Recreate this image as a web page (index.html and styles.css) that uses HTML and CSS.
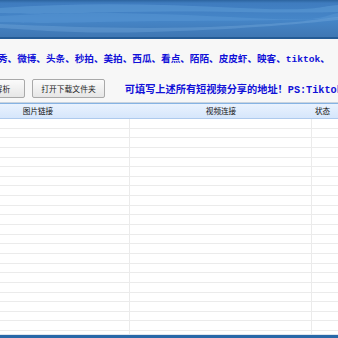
FILE: index.html
```html
<!DOCTYPE html>
<html lang="zh-CN">
<head>
    <meta charset="UTF-8">
    <meta name="viewport" content="width=device-width, initial-scale=1.0">
    <title>短视频解析</title>
    <link rel="stylesheet" href="styles.css">
</head>
<body>
    <div class="window">
        <header class="banner">
            <svg class="banner-art" width="338" height="39" viewBox="0 0 338 39" preserveAspectRatio="none">
                <defs>
                    <linearGradient id="sky" x1="0" y1="0" x2="0" y2="1">
                        <stop offset="0" stop-color="#2c649f"/>
                        <stop offset="0.08" stop-color="#3f7cbf"/>
                        <stop offset="0.5" stop-color="#4686c8"/>
                        <stop offset="1" stop-color="#3e75b1"/>
                    </linearGradient>
                </defs>
                <rect width="338" height="39" fill="url(#sky)"/>
                <path d="M0 8 C80 2 160 4 240 8 S320 6 338 5 L338 12 C280 14 200 10 120 12 S30 14 0 13 Z" fill="#5d9ad6" opacity="0.55"/>
                <path d="M0 16 C90 10 170 14 250 18 S320 16 338 13 L338 18 C270 22 180 20 100 22 S20 22 0 22 Z" fill="#5b98d4" opacity="0.45"/>
                <path d="M0 24 C70 27 150 30 230 26 S310 20 338 17 L338 20 C300 24 230 30 150 32 S40 30 0 28 Z" fill="#7cb0e0" opacity="0.35"/>
                <rect y="37" width="338" height="2" fill="#245b95"/>
            </svg>
        </header>

        <p class="sites">秀、微博、头条、秒拍、美拍、西瓜、看点、陌陌、皮皮虾、映客、tiktok、</p>

        <div class="toolbar">
            <button class="btn btn-parse">开始解析</button>
            <button class="btn">打开下载文件夹</button>
            <span class="hint">可填写上述所有短视频分享的地址！PS:Tiktok</span>
        </div>

        <section class="grid">
            <div class="grid-head">
                <div class="cell">图片链接</div>
                <div class="cell">视频连接</div>
                <div class="cell cell-left">状态</div>
            </div>
            <div class="grid-body" id="rows"></div>
        </section>

        <footer class="statusbar"></footer>
    </div>
    <script>
        const rows = document.getElementById("rows");
        for (let i = 0; i < 24; i++) {
            const row = document.createElement("div");
            row.className = "grid-row";
            row.innerHTML = '<div class="cell"></div><div class="cell"></div><div class="cell"></div>';
            rows.appendChild(row);
        }
    </script>
</body>
</html>
```

FILE: styles.css
```css
/* Global */
body {
    margin: 0;
    padding: 0;
    background-color: #f7f7f7;
    font-family: "Noto Sans CJK SC", "Liberation Sans", sans-serif;
    overflow: hidden;
}

.window {
    width: 338px;
    height: 338px;
    display: flex;
    flex-direction: column;
    overflow: hidden;
}

/* Banner */
.banner {
    height: 39px;
    flex: none;
}

.banner-art {
    display: block;
}

/* Supported sites */
.sites {
    margin: 15px 0 0 -2px;
    font-family: "Liberation Mono", "Noto Sans CJK SC", monospace;
    font-size: 9.6px;
    line-height: 12px;
    font-weight: bold;
    color: #1010d8;
    white-space: nowrap;
}

/* Toolbar */
.toolbar {
    display: flex;
    align-items: center;
    gap: 7px;
    margin-top: 13px;
    height: 19px;
    white-space: nowrap;
}

.btn {
    height: 19px;
    padding: 0 8px;
    font-family: inherit;
    font-size: 7.8px;
    color: #222;
    background: linear-gradient(#fbfbfb, #e6e6e6);
    border: 1px solid #a9a9a9;
    border-radius: 2px;
}

.btn-parse {
    width: 56px;
    margin-left: -30px;
    text-align: right;
    padding-right: 14px;
}

.btn:hover {
    background: linear-gradient(#ffffff, #dde9f6);
}

.hint {
    margin-left: 13px;
    font-family: "Liberation Mono", "Noto Sans CJK SC", monospace;
    font-size: 10.2px;
    font-weight: bold;
    color: #1010d8;
}

/* Grid */
.grid {
    flex: 1;
    margin-top: 4px;
    border-top: 1px solid #c9d3de;
    overflow: hidden;
    background: #ffffff;
}

.grid-head,
.grid-row {
    display: grid;
    grid-template-columns: 184px 182px 1fr;
    margin-left: -54px;
}

.grid-head {
    height: 14px;
    border-top: 1px solid #86b3e3;
    border-bottom: 1px solid #aecaed;
    background: linear-gradient(#e9f2fe, #d6e6fb);
    font-size: 7.6px;
    line-height: 14px;
    color: #111;
}

.grid-head .cell {
    text-align: center;
}

.grid-head .cell-left {
    text-align: left;
    padding-left: 3px;
}

.grid-row {
    height: 9.65px;
    box-sizing: border-box;
    border-bottom: 1px solid #ebebeb;
}

.grid-row .cell {
    border-right: 1px solid #ebebeb;
}

.grid-row .cell:last-child {
    border-right: none;
}

/* Status bar */
.statusbar {
    height: 3px;
    flex: none;
    border-top: 1px solid #dfe6ee;
    background: #2868a8;
}
```
